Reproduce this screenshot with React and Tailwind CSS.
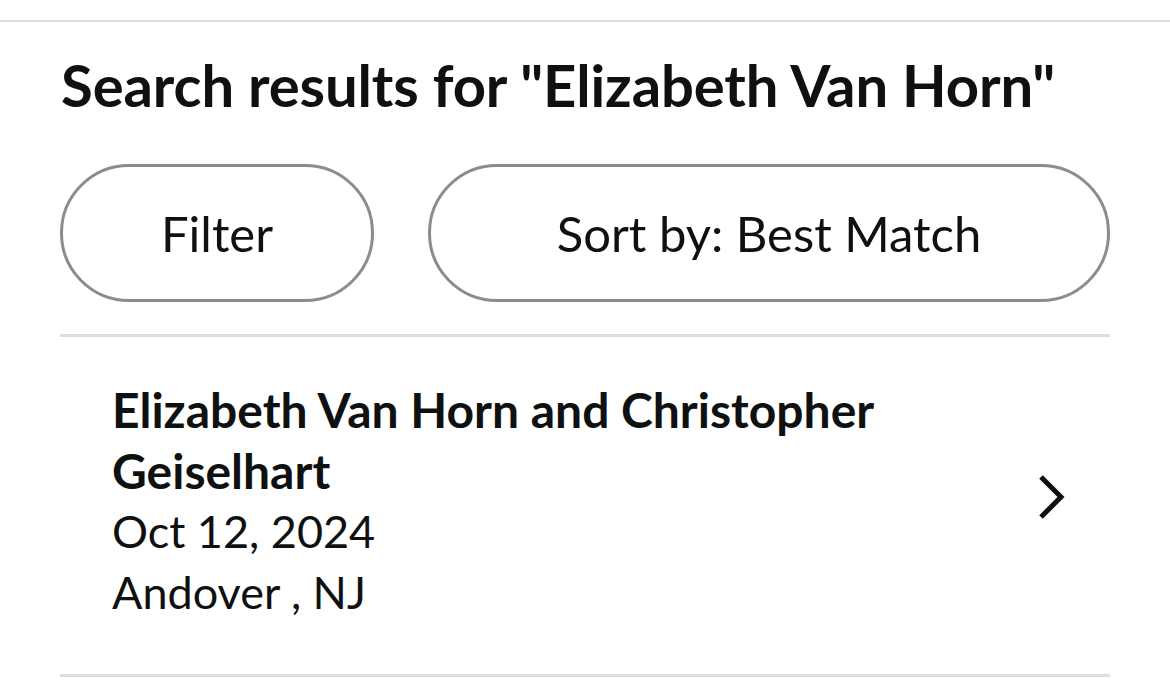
export default function App() {
  return (
    <div className="w-[1170px] h-[683px] bg-white text-[#0f1111] overflow-hidden" style={{ fontFamily: 'Lato, "Noto Sans", sans-serif' }}>
      <div className="h-[20px]" />
      <div className="border-t-2 border-[#dedede]" />
      <div className="px-[60px]">
        <h1 className="h-[126px] flex items-center text-[58px] font-bold leading-none tracking-[-0.1px] pl-[1px]">
          Search results for "Elizabeth Van Horn"
        </h1>
        <div className="pt-[16px] flex gap-[54px]">
          <button className="w-[314px] h-[138px] rounded-full border-[3px] border-[#8c8c8c] flex items-center justify-center text-[49px] leading-none">
            Filter
          </button>
          <button className="flex-1 h-[138px] rounded-full border-[3px] border-[#8c8c8c] flex items-center justify-center text-[49px] leading-none">
            Sort by: Best Match
          </button>
        </div>
        <div className="mt-[32px] border-t-[3px] border-[#dddddd]" />
        <div className="h-[337px] flex items-center pl-[52px] pr-[44px]">
          <div className="flex-1 text-[45px] leading-[61px] -mt-[10px]">
            <div className="font-bold text-[48px] max-w-[860px]">Elizabeth Van Horn and Christopher Geiselhart</div>
            <div>Oct 12, 2024</div>
            <div>Andover , NJ</div>
          </div>
          <svg width="30" height="50" viewBox="0 0 30 50" className="shrink-0 -mt-[18px]">
            <path d="M5 5 L25 25 L5 45" fill="none" stroke="#0f1111" strokeWidth="5" strokeLinecap="butt" strokeLinejoin="miter" />
          </svg>
        </div>
        <div className="border-t-[3px] border-[#dddddd]" />
      </div>
    </div>
  );
}
